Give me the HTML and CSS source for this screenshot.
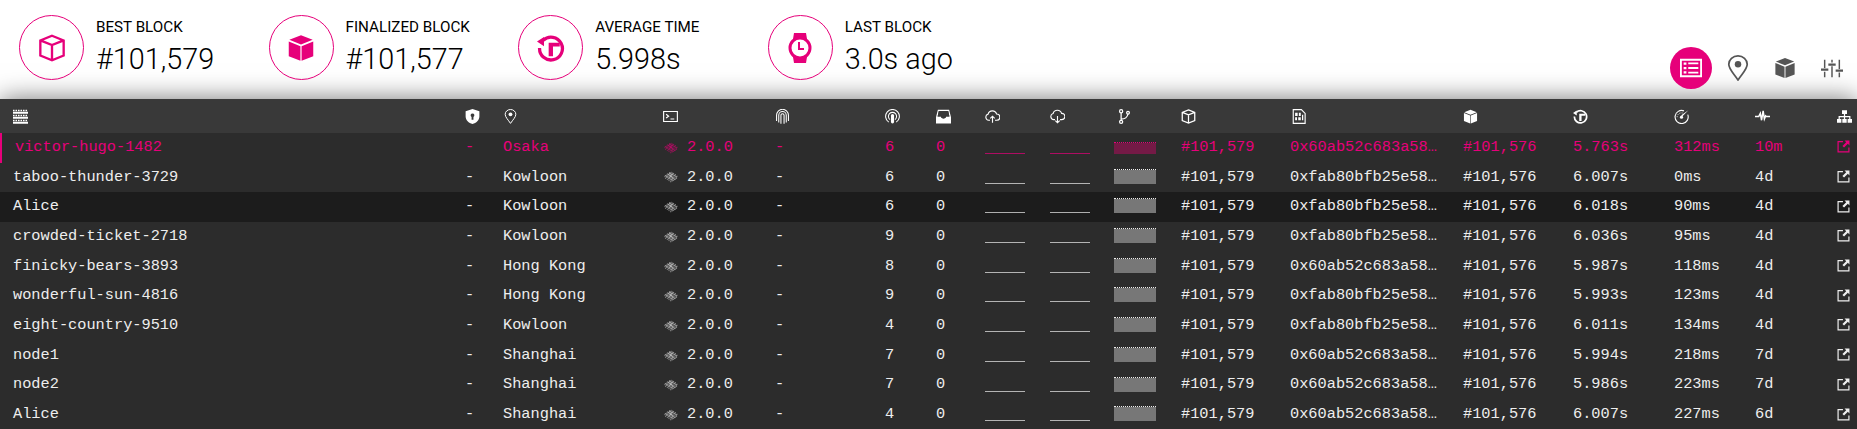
FILE: index.html
```html
<!DOCTYPE html>
<html>
<head>
    <title>Telemetry - Node list</title>
    <link rel="stylesheet" href="styles.css">
</head>
<body>
    <svg class="sprites" width="0" height="0">
        <symbol id="i-nodes" viewBox="0 0 24 24">
            <g fill="none" stroke="currentColor">
                <path stroke-width="2.500" stroke-dasharray="2.500 1.500" d="M0 2.500h24M0 10.500h24M0 18.500h24"/>
                <path stroke-width="3" d="M0 6h24M0 14h24M0 22h24"/>
            </g>
        </symbol>
        <symbol id="i-shield" viewBox="0 0 24 24">
            <path fill="currentColor" fill-rule="evenodd" d="M12 0l11 3.500V12c0 6-5 10.500-11 12C6 22.500 1 18 1 12V3.500zM12 7a3 3 0 0 0-1.500 5.600V17h3v-4.400A3 3 0 0 0 12 7z"/>
        </symbol>
        <symbol id="i-pin" viewBox="0 0 24 24">
            <path fill="none" stroke="currentColor" stroke-width="1.600" d="M12 23C8 17 3.500 13 3.500 8.500a8.500 7.700 0 0 1 17 0C20.500 13 16 17 12 23z"/>
            <circle cx="12" cy="8.500" r="3" fill="currentColor"/>
        </symbol>
        <symbol id="i-term" viewBox="0 0 24 24">
            <path fill="none" stroke="currentColor" stroke-width="1.800" d="M1 4h22v16H1zM5 8.500l4 3-4 3M12 16h6"/>
        </symbol>
        <symbol id="i-finger" viewBox="0 0 24 24">
            <path fill="none" stroke="currentColor" stroke-width="1.700" d="M2.500 19V10a9.500 9.500 0 0 1 19 0v9M6 21.500V10a6 6 0 0 1 12 0v11.500M9.500 23.500V10a2.500 2.500 0 0 1 5 0v13.500"/>
        </symbol>
        <symbol id="i-peers" viewBox="0 0 24 24">
            <path fill="none" stroke="currentColor" stroke-width="1.700" d="M6 21a11 11 0 1 1 12 0M8 17a6.500 6.500 0 1 1 8 0"/>
            <rect x="9.500" y="8" width="5" height="15" rx="2.500" fill="currentColor"/>
        </symbol>
        <symbol id="i-inbox" viewBox="0 0 24 24">
            <path fill="currentColor" d="M3 1h18l3 12v10H0V13zM4.500 3L2.500 12H8c0 2 2 3 4 3s4-1 4-3h5.500l-2-9z"/>
            <path fill="#393939" d="M4.500 3h15l2 9H16c0 2-2 3-4 3s-4-1-4-3H2.500z"/>
        </symbol>
        <symbol id="i-up" viewBox="0 0 24 24">
            <path fill="none" stroke="currentColor" stroke-width="1.800" d="M8 18H6a5 5 0 0 1-1-9.800A7 7 0 0 1 18.500 8 5 5 0 0 1 19 18h-3M12 22V12M8.500 15l3.500-3.500 3.500 3.500"/>
        </symbol>
        <symbol id="i-down" viewBox="0 0 24 24">
            <path fill="none" stroke="currentColor" stroke-width="1.800" d="M8 17H6a5 5 0 0 1-1-9.800A7 7 0 0 1 18.500 7 5 5 0 0 1 19 17h-3M12 11v11M8.500 18.500L12 22l3.500-3.500"/>
        </symbol>
        <symbol id="i-fork" viewBox="0 0 24 24">
            <g fill="none" stroke="currentColor" stroke-width="2">
                <circle cx="5" cy="3.500" r="2.500"/>
                <circle cx="5" cy="20.500" r="2.500"/>
                <circle cx="16" cy="6" r="2.200"/>
                <path d="M5 6v12M5 16c6 0 10-3 11-8"/>
            </g>
        </symbol>
        <symbol id="i-cube-o" viewBox="0 0 24 24">
            <path fill="none" stroke="currentColor" stroke-width="2" d="M12 1.500L22 5.500V18.500L12 22.500 2 18.500V5.500zM2 5.500L12 9.500 22 5.500M12 9.500V22.500"/>
        </symbol>
        <symbol id="i-cube" viewBox="0 0 24 24">
            <path fill="currentColor" d="M12 1l10 4-10 4L2 5zM1.500 6.500l10 4V23l-10-4zM22.500 6.500l-10 4V23l10-4z"/>
        </symbol>
        <symbol id="i-file" viewBox="0 0 24 24">
            <path fill="none" stroke="currentColor" stroke-width="1.800" d="M2 1h13l6 6v16H2z"/>
            <path fill="currentColor" d="M5 6h4v5H5zM11 6h3v5h-3zM5 13h3v5H5zM10 13h4v5h-4zM16 9h2v9h-2z"/>
        </symbol>
        <symbol id="i-timer" viewBox="0 0 24 24">
            <path fill="none" stroke="currentColor" stroke-width="2.800" d="M5.300 5.300A9.800 9.800 0 1 1 2.200 12"/>
            <path fill="currentColor" d="M0 6.500l6-4v8zM10 7.500h9.500v3.200h-5.800V19H10z"/>
        </symbol>
        <symbol id="i-gauge" viewBox="0 0 24 24">
            <path fill="none" stroke="currentColor" stroke-width="1.800" d="M16 3A10.500 10.500 0 1 0 22 9"/>
            <path fill="none" stroke="currentColor" stroke-width="1.500" stroke-dasharray="1.500 2" d="M5 13a7 7 0 0 1 9-6.500"/>
            <circle cx="12" cy="13" r="2.500" fill="currentColor"/>
            <path fill="currentColor" d="M23 2l-9.500 9.500-2-1.500z"/>
        </symbol>
        <symbol id="i-pulse" viewBox="0 0 24 24">
            <path fill="none" stroke="currentColor" stroke-width="2.400" d="M0 12h6l2.500-5 2 11 2.500-15 2 13 2-5 1 1h6"/>
        </symbol>
        <symbol id="i-tree" viewBox="0 0 24 24">
            <path fill="currentColor" d="M8 2h8v6H8zM0 16h7v6H0zM8.500 16h7v6h-7zM17 16h7v6h-7zM11 8h2v3h8.500v5h-2v-3H13v3h-2v-3H4.500v3h-2v-5H11z"/>
        </symbol>
        <symbol id="i-link" viewBox="0 0 24 24">
            <path fill="none" stroke="currentColor" stroke-width="2.200" d="M11 3H2v19h20v-8"/>
            <path fill="currentColor" d="M14 1h9v9l-3-3-7 7-3-3 7-7z"/>
        </symbol>
        <symbol id="i-parity" viewBox="0 0 24 24">
            <g fill="none" stroke="currentColor" stroke-width="2.200" stroke-dasharray="1.300 1">
                <path opacity=".6" d="M1 13l14-8M2 16l16-9M5 18l16-9M8 20l15-8M11 22l12-7"/>
                <path opacity=".6" d="M2 11l14 9M5 8l14 10M9 6l13 8"/>
            </g>
            <path fill="none" stroke="currentColor" stroke-width="1.500" stroke-dasharray="1.500 .8" d="M9 8l6 7M15 8l-6 7"/>
        </symbol>
        <symbol id="i-list" viewBox="0 0 24 24">
            <path fill="none" stroke="currentColor" stroke-width="2" d="M1 3h22v18H1z"/>
            <path fill="currentColor" d="M4 6h3v2.500H4zM9 6h11v2H9zM4 10.800h3v2.500H4zM9 11h11v2H9zM4 15.500h3V18H4zM9 16h11v2H9z"/>
        </symbol>
        <symbol id="i-sliders" viewBox="0 0 24 24">
            <path fill="currentColor" d="M3.200 3h1.600v9H3.200zM3.200 16h1.600v6H3.200zM0 12.500h8v2.500H0zM11.200 3h1.600v3h-1.600zM11.200 10h1.600v12h-1.600zM8 7h8v2.500H8zM19.200 3h1.600v10h-1.600zM19.200 17h1.600v5h-1.600zM16 13.500h8V16h-8z"/>
        </symbol>
    </svg>

    <header class="top">
        <div class="tiles">
            <div class="tile">
                <div class="tile-icon"><svg><use href="#i-cube-o"/></svg></div>
                <div>
                    <div class="tile-label">Best Block</div>
                    <div class="tile-value">#101,579</div>
                </div>
            </div>
            <div class="tile">
                <div class="tile-icon"><svg><use href="#i-cube"/></svg></div>
                <div>
                    <div class="tile-label">Finalized Block</div>
                    <div class="tile-value">#101,577</div>
                </div>
            </div>
            <div class="tile">
                <div class="tile-icon"><svg><use href="#i-timer"/></svg></div>
                <div>
                    <div class="tile-label">Average Time</div>
                    <div class="tile-value">5.998s</div>
                </div>
            </div>
            <div class="tile">
                <div class="tile-icon">
                    <svg viewBox="0 0 24 30">
                        <path fill="currentColor" d="M6 0h12l1 6H5zM5 24h14l-1 6H6z"/>
                        <circle cx="12" cy="15" r="10" fill="#fff" stroke="currentColor" stroke-width="3"/>
                        <path fill="none" stroke="currentColor" stroke-width="2" d="M11 9v7h5"/>
                    </svg>
                </div>
                <div>
                    <div class="tile-label">Last Block</div>
                    <div class="tile-value">3.0s ago</div>
                </div>
            </div>
        </div>
        <nav class="tabs">
            <div class="tab tab-active"><svg><use href="#i-list"/></svg></div>
            <div class="tab"><svg class="tab-pin"><use href="#i-pin"/></svg></div>
            <div class="tab"><svg><use href="#i-cube"/></svg></div>
            <div class="tab"><svg><use href="#i-sliders"/></svg></div>
        </nav>
    </header>

    <table class="nodes">
        <colgroup>
            <col class="c-name"><col class="c-val"><col class="c-loc"><col class="c-ver"><col class="c-net">
            <col class="c-peers"><col class="c-txs"><col class="c-up"><col class="c-down"><col class="c-bar">
            <col class="c-block"><col class="c-hash"><col class="c-final"><col class="c-time"><col class="c-prop">
            <col class="c-uptime"><col class="c-link">
        </colgroup>
        <thead>
            <tr>
                <th><svg><use href="#i-nodes"/></svg></th>
                <th><svg><use href="#i-shield"/></svg></th>
                <th><svg><use href="#i-pin"/></svg></th>
                <th><svg><use href="#i-term"/></svg></th>
                <th><svg><use href="#i-finger"/></svg></th>
                <th><svg><use href="#i-peers"/></svg></th>
                <th><svg><use href="#i-inbox"/></svg></th>
                <th><svg><use href="#i-up"/></svg></th>
                <th><svg><use href="#i-down"/></svg></th>
                <th class="th-fork"><svg><use href="#i-fork"/></svg></th>
                <th><svg><use href="#i-cube-o"/></svg></th>
                <th class="th-file"><svg><use href="#i-file"/></svg></th>
                <th><svg><use href="#i-cube"/></svg></th>
                <th><svg><use href="#i-timer"/></svg></th>
                <th><svg><use href="#i-gauge"/></svg></th>
                <th><svg><use href="#i-pulse"/></svg></th>
                <th><svg><use href="#i-tree"/></svg></th>
            </tr>
        </thead>
        <tbody>
            <tr class="pinned">
                <td>victor-hugo-1482</td><td>-</td><td>Osaka</td>
                <td><svg class="parity"><use href="#i-parity"/></svg>2.0.0</td><td>-</td><td>6</td><td>0</td>
                <td class="graph"><div class="plot"><div class="spark"></div></div></td>
                <td class="graph"><div class="plot"><div class="spark"></div></div></td>
                <td class="graph"><div class="plot"><div class="bar" style="height: 12px"></div></div></td>
                <td>#101,579</td><td>0x60ab52c683a58…</td><td>#101,576</td><td>5.763s</td><td>312ms</td><td>10m</td>
                <td><svg class="out"><use href="#i-link"/></svg></td>
            </tr>
            <tr>
                <td>taboo-thunder-3729</td><td>-</td><td>Kowloon</td>
                <td><svg class="parity"><use href="#i-parity"/></svg>2.0.0</td><td>-</td><td>6</td><td>0</td>
                <td class="graph"><div class="plot"><div class="spark"></div></div></td>
                <td class="graph"><div class="plot"><div class="spark"></div></div></td>
                <td class="graph"><div class="plot"><div class="bar" style="height: 15px"></div></div></td>
                <td>#101,579</td><td>0xfab80bfb25e58…</td><td>#101,576</td><td>6.007s</td><td>0ms</td><td>4d</td>
                <td><svg class="out"><use href="#i-link"/></svg></td>
            </tr>
            <tr class="hovered">
                <td>Alice</td><td>-</td><td>Kowloon</td>
                <td><svg class="parity"><use href="#i-parity"/></svg>2.0.0</td><td>-</td><td>6</td><td>0</td>
                <td class="graph"><div class="plot"><div class="spark"></div></div></td>
                <td class="graph"><div class="plot"><div class="spark"></div></div></td>
                <td class="graph"><div class="plot"><div class="bar" style="height: 15px"></div></div></td>
                <td>#101,579</td><td>0xfab80bfb25e58…</td><td>#101,576</td><td>6.018s</td><td>90ms</td><td>4d</td>
                <td><svg class="out"><use href="#i-link"/></svg></td>
            </tr>
            <tr>
                <td>crowded-ticket-2718</td><td>-</td><td>Kowloon</td>
                <td><svg class="parity"><use href="#i-parity"/></svg>2.0.0</td><td>-</td><td>9</td><td>0</td>
                <td class="graph"><div class="plot"><div class="spark"></div></div></td>
                <td class="graph"><div class="plot"><div class="spark"></div></div></td>
                <td class="graph"><div class="plot"><div class="bar" style="height: 15px"></div></div></td>
                <td>#101,579</td><td>0xfab80bfb25e58…</td><td>#101,576</td><td>6.036s</td><td>95ms</td><td>4d</td>
                <td><svg class="out"><use href="#i-link"/></svg></td>
            </tr>
            <tr>
                <td>finicky-bears-3893</td><td>-</td><td>Hong Kong</td>
                <td><svg class="parity"><use href="#i-parity"/></svg>2.0.0</td><td>-</td><td>8</td><td>0</td>
                <td class="graph"><div class="plot"><div class="spark"></div></div></td>
                <td class="graph"><div class="plot"><div class="spark"></div></div></td>
                <td class="graph"><div class="plot"><div class="bar" style="height: 15px"></div></div></td>
                <td>#101,579</td><td>0x60ab52c683a58…</td><td>#101,576</td><td>5.987s</td><td>118ms</td><td>4d</td>
                <td><svg class="out"><use href="#i-link"/></svg></td>
            </tr>
            <tr>
                <td>wonderful-sun-4816</td><td>-</td><td>Hong Kong</td>
                <td><svg class="parity"><use href="#i-parity"/></svg>2.0.0</td><td>-</td><td>9</td><td>0</td>
                <td class="graph"><div class="plot"><div class="spark"></div></div></td>
                <td class="graph"><div class="plot"><div class="spark"></div></div></td>
                <td class="graph"><div class="plot"><div class="bar" style="height: 15px"></div></div></td>
                <td>#101,579</td><td>0xfab80bfb25e58…</td><td>#101,576</td><td>5.993s</td><td>123ms</td><td>4d</td>
                <td><svg class="out"><use href="#i-link"/></svg></td>
            </tr>
            <tr>
                <td>eight-country-9510</td><td>-</td><td>Kowloon</td>
                <td><svg class="parity"><use href="#i-parity"/></svg>2.0.0</td><td>-</td><td>4</td><td>0</td>
                <td class="graph"><div class="plot"><div class="spark"></div></div></td>
                <td class="graph"><div class="plot"><div class="spark"></div></div></td>
                <td class="graph"><div class="plot"><div class="bar" style="height: 15px"></div></div></td>
                <td>#101,579</td><td>0xfab80bfb25e58…</td><td>#101,576</td><td>6.011s</td><td>134ms</td><td>4d</td>
                <td><svg class="out"><use href="#i-link"/></svg></td>
            </tr>
            <tr>
                <td>node1</td><td>-</td><td>Shanghai</td>
                <td><svg class="parity"><use href="#i-parity"/></svg>2.0.0</td><td>-</td><td>7</td><td>0</td>
                <td class="graph"><div class="plot"><div class="spark"></div></div></td>
                <td class="graph"><div class="plot"><div class="spark"></div></div></td>
                <td class="graph"><div class="plot"><div class="bar" style="height: 15px"></div></div></td>
                <td>#101,579</td><td>0x60ab52c683a58…</td><td>#101,576</td><td>5.994s</td><td>218ms</td><td>7d</td>
                <td><svg class="out"><use href="#i-link"/></svg></td>
            </tr>
            <tr>
                <td>node2</td><td>-</td><td>Shanghai</td>
                <td><svg class="parity"><use href="#i-parity"/></svg>2.0.0</td><td>-</td><td>7</td><td>0</td>
                <td class="graph"><div class="plot"><div class="spark"></div></div></td>
                <td class="graph"><div class="plot"><div class="spark"></div></div></td>
                <td class="graph"><div class="plot"><div class="bar" style="height: 15px"></div></div></td>
                <td>#101,579</td><td>0x60ab52c683a58…</td><td>#101,576</td><td>5.986s</td><td>223ms</td><td>7d</td>
                <td><svg class="out"><use href="#i-link"/></svg></td>
            </tr>
            <tr>
                <td>Alice</td><td>-</td><td>Shanghai</td>
                <td><svg class="parity"><use href="#i-parity"/></svg>2.0.0</td><td>-</td><td>4</td><td>0</td>
                <td class="graph"><div class="plot"><div class="spark"></div></div></td>
                <td class="graph"><div class="plot"><div class="spark"></div></div></td>
                <td class="graph"><div class="plot"><div class="bar" style="height: 15px"></div></div></td>
                <td>#101,579</td><td>0x60ab52c683a58…</td><td>#101,576</td><td>6.007s</td><td>227ms</td><td>6d</td>
                <td><svg class="out"><use href="#i-link"/></svg></td>
            </tr>
        </tbody>
    </table>
</body>
</html>
```

FILE: styles.css
```css
html, body {
    height: 429px;
    overflow: hidden;
}
body {
    margin: 0;
    background: #fff;
    color: #000;
    font-family: Roboto, sans-serif;
}
.sprites {
    position: absolute;
}

/* top bar */
.top {
    display: flex;
    justify-content: space-between;
    height: 99px;
}
.tiles {
    display: flex;
}
.tile {
    display: flex;
    gap: 12px;
    width: 230.6px;
    padding: 15px 0 0 19px;
}
.tile-icon {
    display: flex;
    align-items: center;
    justify-content: center;
    width: 63px;
    height: 63px;
    border: 1px solid #e6007a;
    border-radius: 50%;
    color: #e6007a;
}
.tile-icon svg {
    width: 28px;
    height: 30px;
}
.tile-label {
    margin-top: 2px;
    font-size: 15.2px;
    line-height: 20px;
    text-transform: uppercase;
}
.tile-value {
    margin-top: 4px;
    font-size: 28.8px;
    font-weight: 300;
    line-height: 36px;
}
.tabs {
    display: flex;
    align-items: flex-end;
    gap: 5px;
    padding: 0 4px 10px 0;
}
.tab {
    display: flex;
    align-items: center;
    justify-content: center;
    width: 42px;
    height: 42px;
    border-radius: 50%;
    color: #555;
}
.tab svg {
    width: 22px;
    height: 22px;
}
.tab .tab-pin {
    width: 26px;
    height: 26px;
}
.tab-active {
    background: #e6007a;
    color: #fff;
}

/* node table */
.nodes {
    width: 100%;
    table-layout: fixed;
    border-collapse: collapse;
    background: #2c2c2c;
    color: #eee;
    font-family: "Liberation Mono", monospace;
    font-size: 15.3px;
    box-shadow: 0 0 24px rgba(0,0,0,.55);
}
.c-name { width: 465px; }
.c-val { width: 38px; }
.c-loc { width: 160px; }
.c-ver { width: 112px; }
.c-net { width: 110px; }
.c-peers { width: 51px; }
.c-txs { width: 49px; }
.c-up { width: 65px; }
.c-down { width: 64px; }
.c-bar { width: 67px; }
.c-block { width: 109px; }
.c-hash { width: 173px; }
.c-final { width: 110px; }
.c-time { width: 101px; }
.c-prop { width: 81px; }
.c-uptime { width: 82px; }

th {
    height: 34px;
    padding: 0;
    background: #393939;
    color: #fff;
    text-align: left;
}
th svg {
    display: block;
    width: 15px;
    height: 15px;
}
th:first-child, td:first-child {
    padding-left: 13px;
}
th.th-fork {
    padding-left: 4px;
}
th.th-file {
    padding-left: 2px;
}
td {
    height: 27.7px;
    padding: 0 0 2px;
    white-space: nowrap;
}
tr.hovered td {
    background: #1c1c1c;
}
tr.pinned td {
    color: #e6007a;
}
tr.pinned td:first-child {
    padding-left: 15px;
    box-shadow: inset 2px 0 0 #e6007a;
}
.parity {
    width: 16px;
    height: 14px;
    margin-right: 8px;
    vertical-align: middle;
}
.out {
    display: block;
    width: 13px;
    height: 13px;
}
td.graph {
    vertical-align: top;
}
.plot {
    display: flex;
    align-items: flex-end;
    height: 21px;
}
.spark {
    width: 40px;
    height: 1px;
    background: currentColor;
    opacity: .7;
}
.bar {
    width: 42px;
    box-sizing: border-box;
    border-top: 1px dotted #eee;
    background: #777;
    background-clip: padding-box;
}
tr.pinned .bar {
    border-top-color: #e6007a;
    background-color: #741a46;
}
```
